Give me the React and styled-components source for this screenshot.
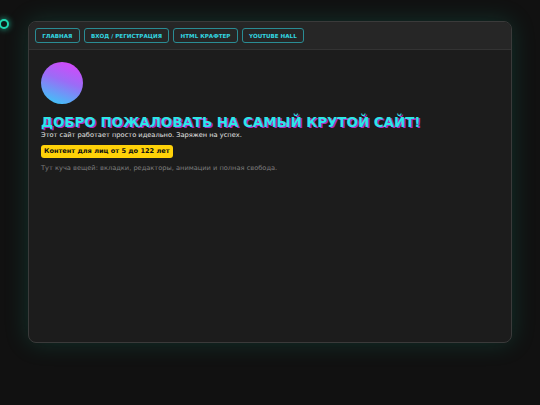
import React from 'react';
import styled, { createGlobalStyle } from 'styled-components';

const GlobalStyle = createGlobalStyle`
  html, body {
    margin: 0;
    padding: 0;
    background: #111111;
    font-family: "DejaVu Sans", Verdana, sans-serif;
  }
`;

const Page = styled.div`
  position: relative;
  width: 540px;
  height: 405px;
  padding: 21px 28px 0 28px;
  box-sizing: border-box;
  overflow: hidden;
`;

const CursorRing = styled.div`
  position: absolute;
  left: -1px;
  top: 19px;
  width: 6px;
  height: 6px;
  border: 2px solid #1fd8b0;
  border-radius: 50%;
  background: #0c1a18;
  box-shadow: 0 0 6px rgba(31, 216, 176, 0.8);
`;

const Window = styled.div`
  width: 484px;
  height: 322px;
  box-sizing: border-box;
  background: #1c1c1c;
  border: 1px solid #3a3a3a;
  border-radius: 8px;
  box-shadow: 0 0 24px rgba(20, 200, 160, 0.18);
  overflow: hidden;
  display: flex;
  flex-direction: column;
`;

const Toolbar = styled.nav`
  display: flex;
  gap: 4px;
  padding: 6px 6px;
  background: #262626;
  border-bottom: 1px solid #333333;
`;

const NavButton = styled.button`
  all: unset;
  height: 15px;
  padding: 0 6.3px;
  box-sizing: border-box;
  display: flex;
  align-items: center;
  border: 1px solid #2a8c94;
  border-radius: 3px;
  color: #33d6e0;
  font-family: "DejaVu Sans", Verdana, sans-serif;
  font-weight: bold;
  font-size: 5.6px;
  text-transform: uppercase;
  cursor: pointer;
`;

const Content = styled.main`
  padding: 12px 12px;
  display: flex;
  flex-direction: column;
  align-items: flex-start;
`;

const Avatar = styled.div`
  width: 42px;
  height: 42px;
  border-radius: 50%;
  background: linear-gradient(200deg, #e040fb 0%, #9b6cf6 45%, #2fd2f8 100%);
`;

const Title = styled.h1`
  margin: 11px 0 0 0;
  font-size: 13.4px;
  line-height: 16px;
  font-weight: bold;
  color: #2ee6e6;
  text-shadow: 1.5px 1px 0 #b02ac8;
`;

const Text = styled.p`
  margin: ${p => p.$top || 0}px 0 0 0;
  font-size: 6.65px;
  line-height: 9px;
  color: ${p => p.$muted ? '#7e7e7e' : '#e4e4e4'};
`;

const Badge = styled.span`
  margin-top: 5px;
  padding: 2px 3px;
  background: #ffd208;
  color: #111111;
  border-radius: 3px;
  font-size: 6.6px;
  line-height: 9px;
  font-weight: bold;
`;

const links = ['Главная', 'Вход / Регистрация', 'HTML Крафтер', 'YouTube Hall'];

export default function App() {
  return (
    <>
      <GlobalStyle />
      <Page>
        <CursorRing />
        <Window>
          <Toolbar>
            {links.map(l => <NavButton key={l}>{l}</NavButton>)}
          </Toolbar>
          <Content>
            <Avatar />
            <Title>ДОБРО ПОЖАЛОВАТЬ НА САМЫЙ КРУТОЙ САЙТ!</Title>
            <Text>Этот сайт работает просто идеально. Заряжен на успех.</Text>
            <Badge>Контент для лиц от 5 до 122 лет</Badge>
            <Text $muted $top={6}>Тут куча вещей: вкладки, редакторы, анимации и полная свобода.</Text>
          </Content>
        </Window>
      </Page>
    </>
  );
}
